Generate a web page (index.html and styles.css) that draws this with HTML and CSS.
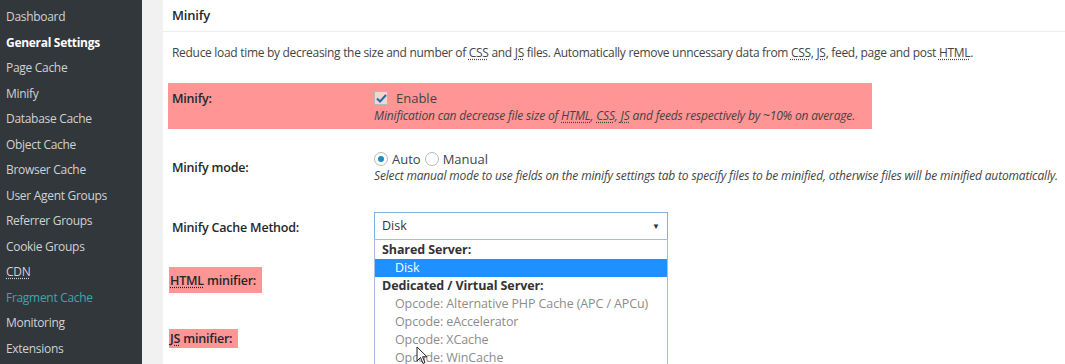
FILE: index.html
```html
<!DOCTYPE html>
<html lang="en">
<head>
    <meta charset="UTF-8">
    <title>Performance - General Settings</title>
    <link rel="stylesheet" href="styles.css">
</head>
<body>
    <nav class="sidebar">
        <a class="nav-item">Dashboard</a>
        <a class="nav-item active">General Settings</a>
        <a class="nav-item">Page Cache</a>
        <a class="nav-item">Minify</a>
        <a class="nav-item">Database Cache</a>
        <a class="nav-item">Object Cache</a>
        <a class="nav-item">Browser Cache</a>
        <a class="nav-item">User Agent Groups</a>
        <a class="nav-item">Referrer Groups</a>
        <a class="nav-item">Cookie Groups</a>
        <a class="nav-item"><abbr>CDN</abbr></a>
        <a class="nav-item fragment">Fragment Cache</a>
        <a class="nav-item">Monitoring</a>
        <a class="nav-item">Extensions</a>
    </nav>

    <main class="main">
        <section class="panel">
            <h3 class="panel-title">Minify</h3>
            <div class="panel-body">
                <p class="intro">
                    Reduce load time by decreasing the size and number of <abbr>CSS</abbr> and <abbr>JS</abbr> files. Automatically remove unncessary data from <abbr>CSS</abbr>, <abbr>JS</abbr>, feed, page and post <abbr>HTML</abbr>.
                </p>

                <div class="row row-enable highlight">
                    <div class="label">Minify:</div>
                    <div class="field">
                        <label class="check">
                            <span class="checkbox">
                                <svg width="11" height="9" viewBox="0 0 11 9"><path d="M1 4.5 L4 7.5 L10 1" fill="none" stroke="#1e6fa8" stroke-width="2"/></svg>
                            </span>
                            Enable
                        </label>
                        <p class="hint">Minification can decrease file size of <abbr>HTML</abbr>, <abbr>CSS</abbr>, <abbr>JS</abbr> and feeds respectively by ~10% on average.</p>
                    </div>
                </div>

                <div class="row row-mode">
                    <div class="label">Minify mode:</div>
                    <div class="field">
                        <div class="radios">
                            <span class="radio checked"></span> Auto
                            <span class="radio"></span> Manual
                        </div>
                        <p class="hint">Select manual mode to use fields on the minify settings tab to specify files to be minified, otherwise files will be minified automatically.</p>
                    </div>
                </div>

                <div class="row row-method">
                    <div class="label">Minify Cache Method:</div>
                    <div class="field">
                        <div class="select">
                            <span>Disk</span>
                            <span class="arrow">&#9660;</span>
                            <ul class="dropdown">
                                <li class="group">Shared Server:</li>
                                <li class="option selected">Disk</li>
                                <li class="group">Dedicated / Virtual Server:</li>
                                <li class="option disabled">Opcode: Alternative PHP Cache (APC / APCu)</li>
                                <li class="option disabled">Opcode: eAccelerator</li>
                                <li class="option disabled">Opcode: XCache</li>
                                <li class="option disabled">Opcode: WinCache</li>
                            </ul>
                            <svg class="cursor" width="12" height="19" viewBox="0 0 12 19"><path d="M1 1 L1 15 L4.5 11.5 L7 17.5 L9 16.5 L6.5 10.8 L11 10.8 Z" fill="#fff" stroke="#222" stroke-width="1"/></svg>
                        </div>
                    </div>
                </div>

                <div class="row row-html">
                    <div class="label"><span class="tag"><abbr>HTML</abbr> minifier:</span></div>
                </div>

                <div class="row row-js">
                    <div class="label"><span class="tag"><abbr>JS</abbr> minifier:</span></div>
                </div>
            </div>
        </section>
    </main>
</body>
</html>
```

FILE: styles.css
```css
* {
    margin: 0;
    padding: 0;
    box-sizing: border-box;
}

body {
    display: flex;
    height: 364px;
    overflow: hidden;
    background: #f1f1f1;
    font-family: 'Open Sans', 'Noto Sans', sans-serif;
    font-size: 13px;
    color: #444;
}

abbr {
    text-decoration: underline dotted;
    text-underline-offset: 2px;
}

/* Sidebar */
.sidebar {
    width: 142px;
    flex-shrink: 0;
    background: #32373c;
    display: flex;
    flex-direction: column;
    padding-top: 7px;
}

.nav-item {
    display: block;
    height: 25.9px;
    line-height: 20px;
    padding-left: 6px;
    font-size: 12px;
    color: #d0d2d4;
    letter-spacing: -0.3px;
    white-space: nowrap;
}

.nav-item.active {
    color: #fff;
    font-weight: 700;
}

.nav-item.fragment {
    color: #36a9a8;
}

/* Main */
.main {
    flex: 1;
    padding-left: 21px;
}

.panel {
    background: #fff;
    height: 100%;
}

.panel-title {
    font-size: 13px;
    font-weight: 600;
    color: #23282d;
    padding: 6px 0 0 9px;
    height: 32px;
    border-bottom: 1px solid #eee;
    letter-spacing: -0.2px;
}

.panel-body {
    padding: 0 5px;
}

.intro {
    font-size: 12px;
    letter-spacing: -0.3px;
    padding: 12px 0 0 4px;
    height: 51px;
    color: #444;
}

.row {
    display: flex;
    width: 704px;
}

.label {
    width: 206px;
    flex-shrink: 0;
    padding-left: 4px;
    font-weight: 600;
    color: #23282d;
    font-size: 12.5px;
    letter-spacing: -0.2px;
}

.field {
    flex: 1;
    white-space: nowrap;
}

.hint {
    font-style: italic;
    font-size: 12px;
    letter-spacing: -0.16px;
    color: #444;
}

.highlight {
    background: #ff9595;
}

.row-enable {
    height: 46px;
    padding-top: 6px;
}

.row-enable .label {
    padding-top: 1px;
}

.check {
    display: flex;
    align-items: center;
    gap: 8px;
    height: 18px;
}

.checkbox {
    width: 14px;
    height: 14px;
    border: 1px solid #b4b9be;
    background: #f5d3d3;
    display: flex;
    align-items: center;
    justify-content: center;
}

.row-mode {
    height: 72px;
    padding-top: 21px;
}

.row-mode .label {
    padding-top: 9px;
}

.radios {
    display: flex;
    align-items: center;
    gap: 4px;
    height: 17px;
}

.radio {
    width: 14px;
    height: 14px;
    border-radius: 50%;
    border: 1px solid #b4b9be;
    background: #fff;
    display: inline-flex;
    align-items: center;
    justify-content: center;
}

.radio.checked::after {
    content: '';
    width: 6px;
    height: 6px;
    border-radius: 50%;
    background: #1e8cbe;
}

.row-method {
    height: 57px;
    padding-top: 11px;
}

.row-method .label {
    padding-top: 7px;
}

.select {
    position: relative;
    width: 294px;
    height: 28px;
    border: 1px solid #7fb0e3;
    padding: 4px 7px;
    font-size: 12.5px;
    color: #32373c;
    display: flex;
    justify-content: space-between;
}

.arrow {
    font-size: 8px;
    color: #333;
    padding-top: 3px;
}

.dropdown {
    position: absolute;
    top: 26px;
    left: -1px;
    width: 294px;
    height: 130px;
    background: #fff;
    border: 1px solid #a7bde0;
    list-style: none;
    padding-top: 1px;
    z-index: 2;
}

.dropdown li {
    height: 18px;
    line-height: 18px;
    font-size: 12.5px;
    letter-spacing: -0.1px;
}

.dropdown .group {
    font-weight: 700;
    color: #333;
    padding-left: 7px;
}

.dropdown .option {
    padding-left: 20px;
}

.dropdown .selected {
    background: #1e90ff;
    color: #fff;
}

.dropdown .disabled {
    color: #8c8c8c;
}

.cursor {
    position: absolute;
    left: 41px;
    top: 133px;
    z-index: 3;
}

.row-html {
    height: 62px;
    padding-top: 9px;
}

.row-js {
    height: 40px;
    padding-top: 9px;
}

.tag {
    display: inline-block;
    background: #ff9595;
    padding: 3px 6px 3px 1px;
    margin-left: -3px;
}

.row-html .tag {
    height: 26px;
    padding-top: 5px;
}

.row-js .tag {
    height: 19px;
    padding-top: 1px;
}
```
